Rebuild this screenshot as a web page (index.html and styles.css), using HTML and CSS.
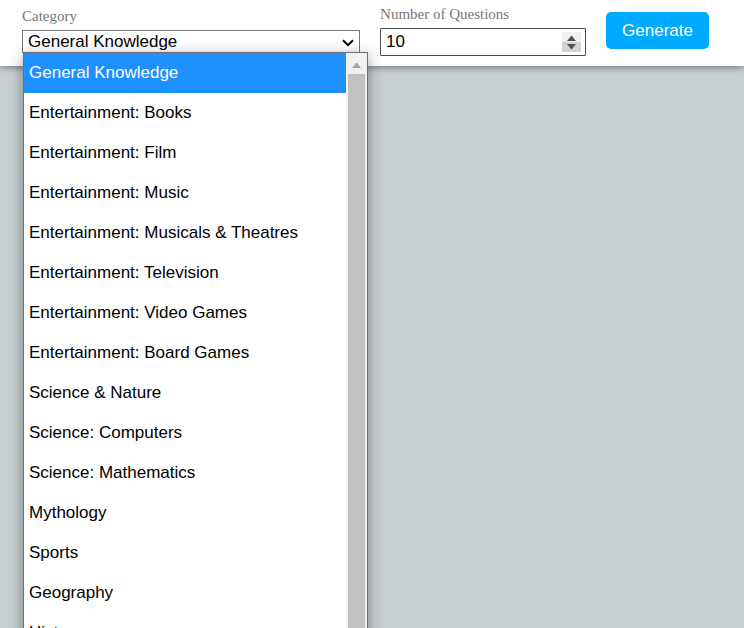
FILE: index.html
```html
<!DOCTYPE html>
<html lang="en">
<head>
<meta charset="utf-8">
<meta name="viewport" content="width=device-width, initial-scale=1">
<title>Quiz</title>
<link rel="stylesheet" href="styles.css">
</head>
<body>
<form class="header">
  <div class="field field-category">
    <label for="category">Category</label>
    <div class="select">
      <select id="category">
        <option>General Knowledge</option>
      </select>
      <svg class="chevron" viewBox="0 0 12 8" aria-hidden="true"><path d="M1 1.2 6 6.2 11 1.2" fill="none" stroke="#000" stroke-width="2"/></svg>
      <div class="menu">
        <ul class="options" role="listbox" aria-label="Category">
          <li role="option" aria-selected="true">General Knowledge</li>
          <li role="option">Entertainment: Books</li>
          <li role="option">Entertainment: Film</li>
          <li role="option">Entertainment: Music</li>
          <li role="option">Entertainment: Musicals &amp; Theatres</li>
          <li role="option">Entertainment: Television</li>
          <li role="option">Entertainment: Video Games</li>
          <li role="option">Entertainment: Board Games</li>
          <li role="option">Science &amp; Nature</li>
          <li role="option">Science: Computers</li>
          <li role="option">Science: Mathematics</li>
          <li role="option">Mythology</li>
          <li role="option">Sports</li>
          <li role="option">Geography</li>
          <li role="option">History</li>
        </ul>
        <div class="scrollbar" aria-hidden="true">
          <svg class="scroll-up" viewBox="0 0 17 21"><path d="M4 15 8 10h1l4 5z" fill="#a3a3a3"/></svg>
          <div class="thumb"></div>
        </div>
      </div>
    </div>
  </div>
  <div class="field field-amount">
    <label for="amount">Number of Questions</label>
    <div class="number">
      <input id="amount" type="number" min="1" value="10">
      <svg class="spinner" viewBox="0 0 19 20" aria-hidden="true">
        <path d="M0 0h19v10H0z" fill="#f0f0f0"/>
        <path d="M0 10h19v10H0z" fill="#d2d2d2"/>
        <path d="M5 9 9 4h1l4 5z" fill="#505050"/>
        <path d="M5 12 9 17h1l4-5z" fill="#505050"/>
      </svg>
    </div>
  </div>
  <button class="generate" type="button">Generate</button>
</form>
</body>
</html>
```
FILE: styles.css
```css
* {
  box-sizing: border-box;
}

body {
  margin: 0;
  height: 100vh;
  overflow: hidden;
  background: #c8d0d2;
  font-family: "Liberation Sans", Arial, sans-serif;
  font-size: 17px;
}

.header {
  display: flex;
  align-items: flex-start;
  gap: 20px;
  padding: 4px 35px 10px 22px;
  background: #fff;
  box-shadow: 0 0 8px rgba(0, 0, 0, 0.6);
}

.field {
  display: flex;
  flex-direction: column;
  gap: 4px;
}

.field-category {
  flex: 338 1 0;
  padding-top: 2px;
}

.field-amount {
  flex: 206 1 0;
}

label {
  font-family: "Liberation Serif", "Times New Roman", serif;
  font-size: 15px;
  line-height: 20px;
  color: #777;
}

.select,
.number {
  position: relative;
}

select,
input {
  display: block;
  width: 100%;
  margin: 0;
  border: 1px solid #767676;
  border-radius: 0;
  background: #fff;
  color: #000;
  font: inherit;
  padding: 0 5px;
  appearance: none;
  outline: none;
}

select {
  height: 23px;
}

input {
  height: 28px;
  border-color: #4c4c4c;
  border-radius: 1px;
  appearance: textfield;
}

.chevron {
  position: absolute;
  top: 9px;
  right: 6px;
  width: 12px;
  height: 8px;
}

.spinner {
  position: absolute;
  top: 4px;
  right: 5px;
  width: 19px;
  height: 20px;
}

.menu {
  position: absolute;
  top: 22px;
  left: 1px;
  right: -8px;
  display: flex;
  border: 1px solid #707070;
  background: #fff;
  box-shadow: 0 4px 14px rgba(0, 0, 0, 0.4);
}

.options {
  flex: 1;
  margin: 0;
  padding: 0;
  list-style: none;
}

.options li {
  padding: 0 5px;
  line-height: 40px;
  white-space: nowrap;
}

.options [aria-selected="true"] {
  background: #1e90ff;
  color: #fff;
}

.scrollbar {
  display: flex;
  flex-direction: column;
  width: 21px;
  padding: 0 2px;
  background: #f1f1f1;
}

.scroll-up {
  width: 17px;
  height: 21px;
}

.thumb {
  flex: 1;
  background: #c1c1c1;
}

.generate {
  height: 37px;
  margin-top: 8px;
  padding: 0 16px;
  border: 0;
  border-radius: 5px;
  background: #0af;
  color: #fff;
  font: inherit;
}
```
